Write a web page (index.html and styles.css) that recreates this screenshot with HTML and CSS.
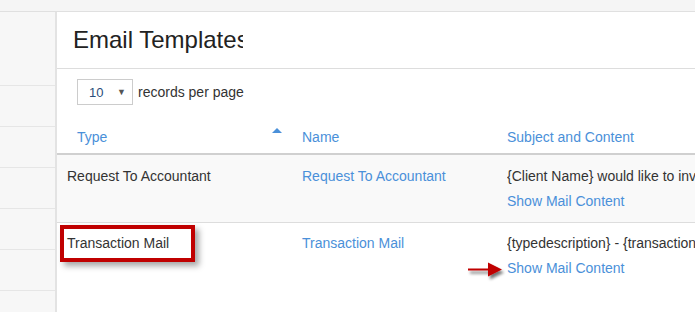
FILE: index.html
```html
<!DOCTYPE html>
<html lang="en">
<head>
    <meta charset="UTF-8">
    <title>Email Templates</title>
    <link rel="stylesheet" href="styles.css">
</head>
<body>
    <div class="topbar"></div>

    <div class="layout">
        <ul class="sidebar">
            <li class="first"></li>
            <li></li>
            <li></li>
            <li></li>
            <li></li>
            <li></li>
        </ul>

        <div class="main">
            <div class="page-head">
                <h1><span>Email Templates</span></h1>
            </div>

            <div class="toolbar">
                <div class="per-page">
                    <span>10</span>
                    <span class="caret">&#9660;</span>
                </div>
                records per page
            </div>

            <table class="grid">
                <thead>
                    <tr>
                        <th class="col-type">Type <span class="sort"></span></th>
                        <th class="col-name">Name</th>
                        <th class="col-subject">Subject and Content</th>
                    </tr>
                </thead>
                <tbody>
                    <tr class="odd">
                        <td>Request To Accountant</td>
                        <td><a href="#">Request To Accountant</a></td>
                        <td>
                            <div class="subject">{Client Name} would like to invite you to connect on Accountants Portal</div>
                            <a href="#" class="show">Show Mail Content</a>
                        </td>
                    </tr>
                    <tr class="last">
                        <td class="marked">
                            Transaction Mail
                            <span class="highlight"></span>
                        </td>
                        <td><a href="#">Transaction Mail</a></td>
                        <td class="pointed">
                            <div class="subject">{typedescription} - {transactionnumber} from {companyname}</div>
                            <a href="#" class="show">Show Mail Content</a>
                            <svg class="arrow" width="42" height="24" viewBox="0 0 42 24">
                                <defs>
                                    <filter id="shade" x="-30%" y="-50%" width="160%" height="200%">
                                        <feGaussianBlur in="SourceAlpha" stdDeviation="1.6"/>
                                        <feOffset dx="2" dy="3" result="blur"/>
                                        <feComponentTransfer><feFuncA type="linear" slope="0.55"/></feComponentTransfer>
                                        <feMerge><feMergeNode/><feMergeNode in="SourceGraphic"/></feMerge>
                                    </filter>
                                </defs>
                                <path d="M1 7.5 H21 V1.5 L35 8.5 L21 15.5 V9.5 H1 Z" fill="#c00000" filter="url(#shade)"/>
                            </svg>
                        </td>
                    </tr>
                </tbody>
            </table>
        </div>
    </div>
</body>
</html>
```

FILE: styles.css
```css
body {
    margin: 0;
    font-family: "Liberation Sans", Arial, sans-serif;
    font-size: 14px;
    color: #333;
    background: #fff;
    overflow: hidden;
}

.topbar {
    height: 11px;
    background: #f5f5f5;
    border-bottom: 1px solid #e0e0e0;
}

.layout {
    display: flex;
}

.sidebar {
    list-style: none;
    margin: 0;
    padding: 0;
    width: 55px;
    flex-shrink: 0;
    background: #f7f7f7;
    border-right: 2px solid #e3e3e3;
    height: 300px;
}

.sidebar li {
    height: 40px;
    border-bottom: 1px solid #e6e6e6;
}

.sidebar li.first {
    height: 73px;
}

.main {
    flex: 1;
    min-width: 0;
    overflow: hidden;
}

.page-head {
    height: 56px;
    border-bottom: 1px solid #ddd;
    padding-left: 16px;
}

.page-head h1 {
    margin: 0;
    font-size: 24px;
    font-weight: normal;
    line-height: 55px;
    color: #222;
}

.page-head h1 span {
    display: inline-block;
    width: 170px;
    overflow: hidden;
    white-space: nowrap;
    vertical-align: top;
}

.toolbar {
    display: flex;
    align-items: center;
    gap: 5px;
    padding: 10px 0 0 20px;
    color: #333;
}

.per-page {
    display: flex;
    align-items: center;
    justify-content: space-between;
    padding: 0 6px 0 11px;
    box-sizing: border-box;
    width: 56px;
    height: 26px;
    border: 1px solid #ccc;
    font-size: 13px;
    color: #2a4d7a;
}

.caret {
    font-size: 9px;
    color: #555;
}

.grid {
    border-collapse: collapse;
    width: 760px;
    margin-top: 12px;
    table-layout: fixed;
}

.grid th {
    text-align: left;
    font-weight: normal;
    color: #4a90d9;
    padding: 10px 10px 6px;
    line-height: 20px;
    border-bottom: 2px solid #d0d0d0;
    white-space: nowrap;
}

.grid th.col-type {
    width: 205px;
    padding-left: 20px;
    position: relative;
}

.grid th.col-name {
    width: 185px;
}

.sort {
    position: absolute;
    right: 10px;
    top: 11px;
    width: 0;
    height: 0;
    border-left: 5px solid transparent;
    border-right: 5px solid transparent;
    border-bottom: 5px solid #4a90d9;
}

.grid td {
    vertical-align: top;
    padding: 11px 10px 11px;
    line-height: 20px;
    border-bottom: 1px solid #ddd;
    white-space: nowrap;
}

.grid tr.last td {
    border-bottom: none;
    padding-top: 10px;
}

.grid tr.odd td {
    background: #f9f9f9;
}

.grid a {
    color: #4a90d9;
    text-decoration: none;
}

.subject {
    margin-bottom: 5px;
    overflow: hidden;
}

.marked,
.pointed {
    position: relative;
}

.highlight {
    position: absolute;
    left: 3px;
    top: 2px;
    width: 135px;
    height: 37px;
    box-sizing: border-box;
    border: 4px solid #c00000;
    box-shadow: 4px 4px 6px rgba(0, 0, 0, 0.35);
}

.arrow {
    position: absolute;
    left: -30px;
    top: 38px;
}
```
